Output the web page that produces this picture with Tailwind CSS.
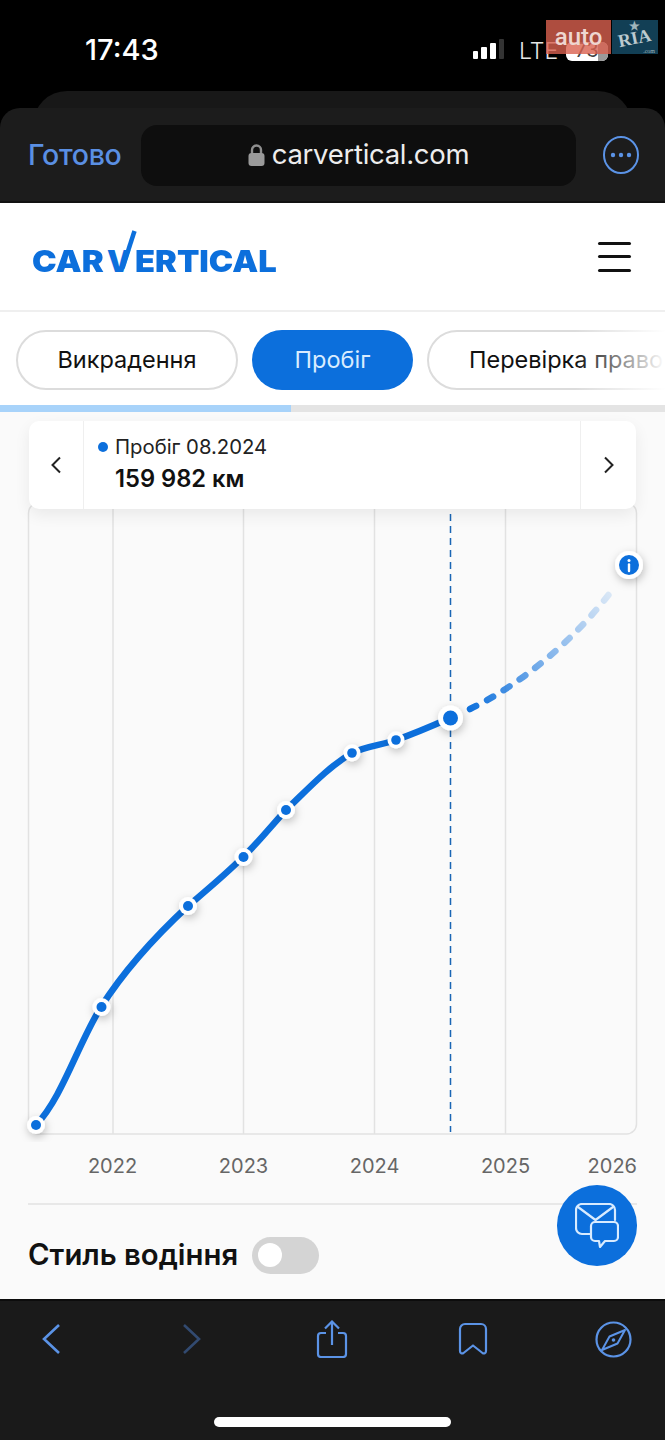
<!doctype html>
<html><head><meta charset="utf-8"><script src="https://cdn.jsdelivr.net/npm/@tailwindcss/browser@4"></script></head>
<body class="m-0">
<div class="relative w-[665px] h-[1440px] overflow-hidden flex flex-col bg-black font-['Inter','Noto_Sans',sans-serif] text-[#111]">
  <!-- status bar -->
  <div class="relative h-[91px] shrink-0 bg-black text-white">
    <div class="absolute top-[31px] left-[85px] text-[29px] leading-[38px] font-medium">17:43</div>
    <div class="absolute left-[473px] top-[39px] flex items-end gap-[3px] h-[20px]">
      <span class="w-[5px] h-[8px] bg-white rounded-[1px]"></span>
      <span class="w-[6px] h-[12px] bg-white rounded-[1px]"></span>
      <span class="w-[6px] h-[16px] bg-white rounded-[1px]"></span>
      <span class="w-[5px] h-[20px] bg-[#333] rounded-[1px]"></span>
    </div>
    <div class="absolute left-[519px] top-[37px] text-[23px] leading-[28px] font-light text-[#e6e6e6]">LTE</div>
    <div class="absolute left-[566px] top-[42px] w-[42px] h-[19px] rounded-[6px] bg-white overflow-hidden"><div class="ml-auto w-[10px] h-full bg-[#9a9a9a]"></div></div>
    <div class="absolute left-[566px] top-[39px] w-[42px] text-center text-[20px] leading-[22px] text-[#444]">73</div>
    <!-- watermark -->
    <div class="absolute left-[546px] top-[20px] w-[65px] h-[34px] bg-[#d9604f]/80 text-[#eed6d0] text-[24px] leading-[34px] text-center font-['Roboto',sans-serif] font-medium">auto</div>
    <div class="absolute left-[612px] top-[20px] w-[46px] h-[34px] bg-[#123f55] text-[#bccacf] font-['Liberation_Serif',serif] font-bold">
      <span class="absolute left-[6px] top-[10px] text-[18px] leading-[16px] -rotate-12">RIA</span>
      <span class="absolute left-[17px] top-0 text-[12px] leading-[12px] text-[#9fb4bb]">★</span>
      <span class="absolute right-[3px] bottom-0 text-[6px] leading-[6px] font-normal text-[#9fb4bb]">.com</span>
    </div>
  </div>
  <!-- browser toolbar -->
  <div class="relative h-[112px] shrink-0">
    <div class="absolute left-[33px] right-[33px] top-0 h-[40px] rounded-t-[34px] bg-[#181818]"></div>
    <div class="absolute inset-x-0 top-[17px] bottom-0 rounded-t-[20px] bg-[#1c1c1c] border-b-2 border-[#111] flex items-center pl-[28px] pr-[26px] pt-[1px]">
      <span class="w-[113px] shrink-0 text-[28.500px] font-medium text-[#5a8fe3] tracking-[-0.3px]">Готово</span>
      <div class="w-[435px] h-[61px] rounded-[16px] bg-[#0e0e0e] flex items-center justify-center gap-[7px] text-[#ededed] text-[27.500px] tracking-[-0.3px]">
        <svg width="17" height="24" viewBox="0 0 17 24"><path d="M4 11V7a4.500 4.500 0 0 1 9 0v4" fill="none" stroke="#8f8f8f" stroke-width="2.400"/><rect x="0.500" y="10" width="16" height="13" rx="3" fill="#9a9a9a"/></svg>
        <span>carvertical.com</span>
      </div>
      <svg class="ml-[27px] shrink-0" width="36" height="38" viewBox="0 0 36 38" fill="none"><ellipse cx="18" cy="19" rx="17" ry="18" stroke="#5b93e6" stroke-width="2"/><circle cx="10" cy="19" r="2.200" fill="#5b93e6"/><circle cx="18" cy="19" r="2.200" fill="#5b93e6"/><circle cx="26" cy="19" r="2.200" fill="#5b93e6"/></svg>
    </div>
  </div>
  <!-- site header -->
  <div class="h-[109px] shrink-0 bg-white border-b-2 border-[#efefef] flex items-center justify-between pl-[32px] pr-[34px]">
    <div class="relative flex mt-[8px] text-[30px] leading-[32px] font-black text-[#0c6fdc] whitespace-nowrap">
      <span class="w-[75px] origin-left scale-x-[1.1]">CAR</span>
      <span class="w-[28px]">V</span>
      <span class="w-[141px] origin-left scale-x-[1.09]">ERTICAL</span>
      <svg class="absolute left-[85px] top-[-15px]" width="22" height="44" viewBox="0 0 22 44"><path d="M5.500 38 L17.500 1" stroke="#0c6fdc" stroke-width="4.500" fill="none"/></svg>
    </div>
    <div class="w-[33px] flex flex-col gap-[10.500px]">
      <span class="h-[3px] bg-[#111] rounded-full"></span><span class="h-[3px] bg-[#111] rounded-full"></span><span class="h-[3px] bg-[#111] rounded-full"></span>
    </div>
  </div>
  <!-- tabs -->
  <div class="relative h-[93px] shrink-0 bg-white overflow-hidden flex items-center gap-[14px] pl-[16px] text-[23.500px] pt-[3px]">
    <div class="shrink-0 h-[60px] w-[222px] rounded-full border-2 border-[#dcdcdc] flex items-center justify-center">Викрадення</div>
    <div class="shrink-0 h-[60px] w-[161px] rounded-full bg-[#0c6fdc] text-[#d9ecff] flex items-center justify-center">Пробіг</div>
    <div class="shrink-0 h-[60px] w-[300px] rounded-full border-2 border-[#dcdcdc] flex items-center pl-[40px] whitespace-nowrap">Перевірка право</div>
    <div class="absolute right-0 inset-y-0 w-[90px] bg-gradient-to-r from-white/0 to-white"></div>
  </div>
  <div class="h-[7px] shrink-0 bg-[#e4e4e4]"><div class="w-[291px] h-full bg-[#a8d3fa]"></div></div>
  <!-- main -->
  <div class="relative flex-1 bg-[#fafafa] flex flex-col">
    <div class="relative z-10 mx-[29px] mt-[9px] h-[88px] shrink-0 bg-white rounded-[10px] shadow-[0_6px_16px_rgba(0,0,0,0.07)] flex items-stretch">
      <div class="w-[55px] border-r border-[#efefef] flex items-center justify-center">
        <svg width="12" height="18" viewBox="0 0 12 18" fill="none"><path d="M10 1.500 2.500 9l7.500 7.500" stroke="#222" stroke-width="2"/></svg>
      </div>
      <div class="flex-1 pl-[14px] pt-[13px]">
        <div class="flex items-center gap-[7px] text-[20.300px] leading-[26px] text-[#222]"><span class="w-[10px] h-[10px] rounded-full bg-[#0c6fdc]"></span>Пробіг 08.2024</div>
        <div class="pl-[17px] mt-[5px] text-[23.700px] leading-[28px] font-semibold">159 982 км</div>
      </div>
      <div class="w-[56px] border-l border-[#efefef] flex items-center justify-center">
        <svg width="12" height="18" viewBox="0 0 12 18" fill="none"><path d="M2 1.500 9.500 9 2 16.500" stroke="#222" stroke-width="2"/></svg>
      </div>
    </div>
    <!-- chart -->
    <svg class="block mt-[-9px] shrink-0" width="665" height="642" viewBox="0 500 665 642" fill="none">
      <defs>
        <linearGradient id="fade" gradientUnits="userSpaceOnUse" x1="465" y1="710" x2="615" y2="585">
          <stop offset="0" stop-color="#0c6fdc"/><stop offset="0.5" stop-color="#0c6fdc" stop-opacity="0.5"/><stop offset="1" stop-color="#0c6fdc" stop-opacity="0.1"/>
        </linearGradient>
        <filter id="sh" x="-100%" y="-100%" width="300%" height="300%"><feDropShadow dx="1" dy="3" stdDeviation="4" flood-color="#000" flood-opacity="0.25"/></filter>
      </defs>
      <rect x="28.500" y="503" width="608" height="631" rx="10" stroke="#e2e2e2" stroke-width="1.500"/>
      <g stroke="#e2e2e2" stroke-width="1.500"><path d="M113 503V1134M243.500 503V1134M374.500 503V1134M505.500 503V1134"/></g>
      <path d="M450.500 514V1132" stroke="#1a66b5" stroke-width="1.500" stroke-dasharray="7 5"/>
      <path d="M36 1125C62 1098 78 1044 101 1007C127 966 160 932 188 906C208 889 226 874 243 857C258 843 272 825 286 810C308 789 328 767 352 753C366 746 382 745 396 740C416 733 432 726 450 718" stroke="#0c6fdc" stroke-width="6.500" stroke-linecap="round"/>
      <path d="M470 709C520 685 575 640 613 589" stroke="url(#fade)" stroke-width="6.500" stroke-linecap="round" stroke-dasharray="7 12.300"/>
      <g fill="#fff" filter="url(#sh)">
        <circle cx="36" cy="1125" r="9"/><circle cx="101.500" cy="1007" r="9"/><circle cx="188" cy="906" r="9"/><circle cx="243.500" cy="857" r="9"/><circle cx="286" cy="810" r="9"/><circle cx="352" cy="753" r="8.500"/><circle cx="396" cy="740" r="8.500"/><circle cx="450.500" cy="718" r="12.500"/><circle cx="629" cy="565" r="14"/>
      </g>
      <g fill="#0c6fdc">
        <circle cx="36" cy="1125" r="5"/><circle cx="101.500" cy="1007" r="5"/><circle cx="188" cy="906" r="5"/><circle cx="243.500" cy="857" r="5"/><circle cx="286" cy="810" r="5"/><circle cx="352" cy="753" r="4.800"/><circle cx="396" cy="740" r="4.800"/><circle cx="450.500" cy="718" r="7.500"/><circle cx="629" cy="565" r="10"/>
      </g>
      <path d="M629 564.500v6.500" stroke="#fff" stroke-width="2.400" stroke-linecap="round"/><circle cx="629" cy="560.500" r="1.500" fill="#fff"/>
    </svg>
    <div class="flex pl-[47px] pr-[28px] mt-[10px] h-[28px] text-[20px] leading-[28px] text-[#666]">
      <span class="w-[131px] text-center">2022</span><span class="w-[131px] text-center">2023</span><span class="w-[131px] text-center">2024</span><span class="w-[131px] text-center">2025</span><span class="flex-1 text-right">2026</span>
    </div>
    <div class="mx-[28px] mt-[23px] border-t-2 border-[#e8e8e8]"></div>
    <div class="flex items-center pl-[28px] mt-[31px] gap-[14px]">
      <span class="text-[29.300px] leading-[38px] font-semibold">Стиль водіння</span>
      <div class="w-[67px] h-[37px] rounded-full bg-[#d4d4d4] flex items-center pl-[6px]"><span class="w-[24px] h-[24px] rounded-full bg-white"></span></div>
    </div>
    <!-- chat fab -->
    <div class="absolute left-[557px] top-[773px] w-[80px] h-[81px] rounded-full bg-[#0c6fdc] flex items-center justify-center">
      <svg width="44" height="45" viewBox="0 0 44 45" fill="none" stroke="#d8ebff" stroke-width="2.200" stroke-linejoin="round" stroke-linecap="round">
        <path d="M15 31H7a6 6 0 0 1-6-6V7a6 6 0 0 1 6-6h27a6 6 0 0 1 6 6v10"/><path d="M3 4 20.500 17 38 4"/>
        <path d="M20 19h19a4 4 0 0 1 4 4v11a4 4 0 0 1-4 4H30l-5 6-1-6h-4a4 4 0 0 1-4-4V23a4 4 0 0 1 4-4z"/>
      </svg>
    </div>
  </div>
  <!-- bottom bar -->
  <div class="relative h-[141px] shrink-0 bg-[#1a1a1a] border-t-2 border-[#0c0c0c]">
    <div class="grid grid-cols-[repeat(5,140.500px)] ml-[-19px] pt-[19px] justify-items-center items-center">
      <svg width="20" height="32" viewBox="0 0 20 32" fill="none"><path d="M18 2 3 16l15 14" stroke="#5b93e6" stroke-width="2.600"/></svg>
      <svg width="20" height="32" viewBox="0 0 20 32" fill="none"><path d="M2 2l15 14L2 30" stroke="#324a70" stroke-width="2.600"/></svg>
      <svg width="32" height="38" viewBox="0 0 32 38" fill="none" stroke="#5b93e6" stroke-width="2.200"><path d="M10 13H5a3 3 0 0 0-3 3v18a3 3 0 0 0 3 3h22a3 3 0 0 0 3-3V16a3 3 0 0 0-3-3h-5"/><path d="M16 25V2M9 8.500l7-7 7 7"/></svg>
      <svg width="30" height="34" viewBox="0 0 30 34" fill="none" stroke="#5b93e6" stroke-width="2.200" stroke-linejoin="round"><path d="M2 7a5 5 0 0 1 5-5h16a5 5 0 0 1 5 5v22c0 2.500-2 3-3.500 2L15 23.500 5.500 31C4 32 2 31.500 2 29z"/></svg>
      <svg width="37" height="37" viewBox="0 0 37 37" fill="none" stroke="#5b93e6" stroke-width="2.200"><circle cx="18.500" cy="18.500" r="17"/><path d="M30 9 22.500 22.500 7 29 14.500 15.500z" stroke-linejoin="round" stroke-width="2"/><circle cx="18.500" cy="19" r="1.800" fill="#5b93e6" stroke="none"/></svg>
    </div>
    <div class="absolute left-[214px] top-[116px] w-[237px] h-[10px] rounded-full bg-white"></div>
  </div>
</div>
</body></html>
